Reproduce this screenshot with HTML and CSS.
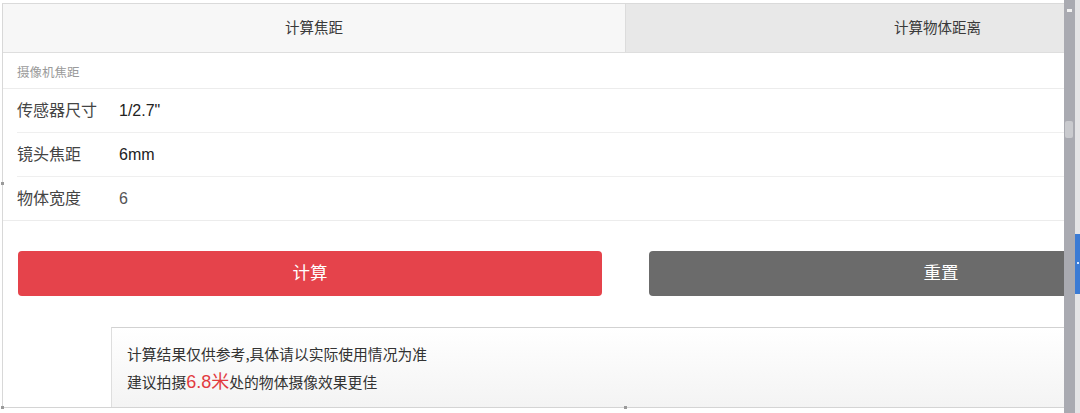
FILE: index.html
```html
<!DOCTYPE html>
<html lang="zh-CN">
<head>
<meta charset="utf-8">
<title>摄像机焦距计算</title>
<link rel="stylesheet" href="styles.css">
</head>
<body>
<div class="screen">
  <div class="editor">
    <div class="frame">
      <div class="page">
        <div class="tabs">
          <div class="tab tab-active">计算焦距</div>
          <div class="tab tab-idle">计算物体距离</div>
        </div>
        <div class="section-title">摄像机焦距</div>
        <div class="rows">
          <div class="row"><span class="label">传感器尺寸</span><span class="value">1/2.7"</span></div>
          <div class="row"><span class="label">镜头焦距</span><span class="value">6mm</span></div>
          <div class="row"><span class="label">物体宽度</span><span class="value value-input">6</span></div>
        </div>
        <div class="buttons">
          <div class="btn btn-calc">计算</div>
          <div class="btn btn-reset">重置</div>
        </div>
        <div class="result">
          <p>计算结果仅供参考,具体请以实际使用情况为准</p>
          <p>建议拍摄<span class="hl">6.8米</span>处的物体摄像效果更佳</p>
        </div>
      </div>
    </div>
    <span class="handle handle-left"></span>
    <span class="handle handle-bl"></span>
    <span class="handle handle-bm"></span>
  </div>
  <div class="scrollbar">
    <div class="scroll-cap"></div>
    <div class="scroll-thumb"></div>
  </div>
  <div class="rail">
    <div class="rail-tab"><span class="rail-dot"></span></div>
  </div>
</div>
</body>
</html>
```
FILE: styles.css
```css
* { box-sizing: border-box; }
html, body { margin: 0; padding: 0; background: #fff; }
body {
  font-family: "Liberation Sans", "Noto Sans CJK SC", sans-serif;
  color: #333;
}
.screen {
  display: flex;
  width: 1080px;
  height: 413px;
  overflow: hidden;
}
.editor {
  position: relative;
  width: 1064px;
  height: 413px;
  padding: 3px 0 0 2px;
}
.frame {
  width: 1062px;
  height: 405px;
  border-top: 1px solid #dadada;
  border-left: 1px solid #d8d8d8;
  border-bottom: 1px solid #d4d4d4;
  overflow: hidden;
}
.page {
  width: 1246px;
}
.tab,
.section-title,
.label,
.btn,
.result p {
  font-family: "Noto Sans CJK SC", "Liberation Sans", sans-serif;
}
.tabs {
  display: flex;
  height: 49px;
  border-bottom: 1px solid #dedede;
}
.tab {
  width: 623px;
  display: flex;
  align-items: center;
  justify-content: center;
  padding-bottom: 2px;
  font-size: 14.5px;
  line-height: 20px;
  color: #3a3a3a;
}
.tab-active {
  background: #f7f7f7;
  border-right: 1px solid #dcdcdc;
}
.tab-idle {
  background: #e8e8e8;
}
.section-title {
  height: 36px;
  padding: 3px 0 0 14px;
  display: flex;
  align-items: center;
  font-size: 12.5px;
  line-height: 16px;
  color: #9a9a9a;
  border-bottom: 1px solid #ececec;
}
.rows {
  border-bottom: 1px solid #ececec;
}
.row {
  margin-left: 14px;
  height: 44px;
  display: flex;
  align-items: center;
  border-bottom: 1px solid #efefef;
}
.row:last-child {
  border-bottom: none;
  height: 43px;
}
.label {
  width: 102px;
  padding-bottom: 4px;
  font-size: 16px;
  line-height: 22px;
  color: #444;
}
.value {
  font-size: 16px;
  line-height: 22px;
  color: #222;
}
.value-input {
  color: #555;
}
.buttons {
  display: flex;
  gap: 47px;
  padding: 30px 0 0 15px;
}
.btn {
  width: 584px;
  height: 45px;
  border-radius: 4px;
  display: flex;
  align-items: center;
  justify-content: center;
  padding-bottom: 4px;
  font-size: 17.5px;
  line-height: 24px;
  color: #fff;
}
.btn-calc { background: #e5434b; }
.btn-reset { background: #6b6b6b; }
.result {
  margin: 31px 0 0 108px;
  border-top: 1px solid #d2d2d2;
  border-left: 1px solid #dedede;
  background: linear-gradient(#ffffff, #f2f2f2);
  padding: 12px 0 20px 15px;
  height: 90px;
}
.result p {
  margin: 0;
  font-size: 14.8px;
  line-height: 28px;
  color: #333;
}
.hl {
  font-family: "Liberation Sans", "Noto Sans CJK SC", sans-serif;
  color: #e23b3f;
  font-size: 18px;
}
.handle {
  position: absolute;
  width: 3px;
  height: 3px;
  background: #9a9a9a;
}
.handle-left { left: 1px; top: 182px; }
.handle-bl { left: 1px; top: 406px; }
.handle-bm { left: 624px; top: 406px; }
.scrollbar {
  position: relative;
  width: 11px;
  height: 413px;
  background: #a9aab1;
}
.scroll-cap {
  position: absolute;
  left: 3px;
  top: 9px;
  width: 5px;
  height: 3px;
  background: #f2f2f2;
}
.scroll-thumb {
  position: absolute;
  left: 1px;
  top: 121px;
  width: 8px;
  height: 17px;
  background: #c9cace;
  border-radius: 2px;
}
.rail {
  position: relative;
  width: 5px;
  height: 413px;
  background: #e4e4e6;
}
.rail-tab {
  position: absolute;
  left: 0;
  top: 234px;
  width: 5px;
  height: 60px;
  background: #3b7bd4;
}
.rail-dot {
  position: absolute;
  left: 2px;
  top: 28px;
  width: 2px;
  height: 2px;
  background: #d9e8ff;
}
```
